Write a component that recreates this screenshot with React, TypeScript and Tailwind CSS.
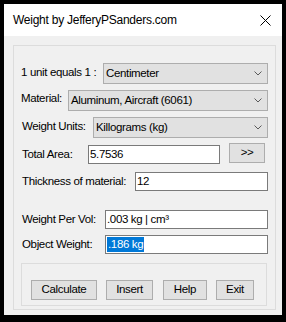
import React from 'react';

const Chevron = () => (
  <svg width="8" height="5" viewBox="0 0 8 5" className="shrink-0">
    <polyline points="0.5,0.5 4,4 7.5,0.5" fill="none" stroke="#5a5a5a" strokeWidth="1" />
  </svg>
);

const Combo = ({ value }: { value: string }) => (
  <div className="h-[21px] flex-1 min-w-0 bg-[#e1e1e1] border border-[#adadad] flex items-center justify-between pl-[2px] pr-[5px]">
    <span className="whitespace-nowrap">{value}</span>
    <Chevron />
  </div>
);

const Field = ({ children, className = '' }: { children: React.ReactNode; className?: string }) => (
  <div className={`h-[19px] bg-white border border-[#7a7a7a] flex items-center pl-[1px] whitespace-nowrap ${className}`}>
    {children}
  </div>
);

const Btn = ({ label, className = '' }: { label: string; className?: string }) => (
  <div className={`h-[20px] shrink-0 bg-[#e1e1e1] border border-[#adadad] flex items-center justify-center ${className}`}>
    {label}
  </div>
);

const Label = ({ text, className = '' }: { text: string; className?: string }) => (
  <span className={`shrink-0 whitespace-nowrap ${className}`}>{text}</span>
);

export default function App() {
  return (
    <div className="w-[286px] h-[322px] bg-black pt-[4px] px-[4px] font-['Liberation_Sans',Arial,sans-serif] text-[11.5px] tracking-[-0.35px] leading-none text-black">
      <div className="h-[311px] flex flex-col bg-[#f0f0f0]">
        {/* title bar */}
        <div className="h-[32px] shrink-0 bg-white flex items-center justify-between pl-[9px] pr-[11px]">
          <span className="text-[12px] tracking-[-0.25px]">Weight by JefferyPSanders.com</span>
          <svg width="11" height="11" viewBox="0 0 11 11">
            <path d="M0.5 0.5 L10.5 10.5 M10.5 0.5 L0.5 10.5" stroke="#000" strokeWidth="1" />
          </svg>
        </div>

        <div className="flex-1 pt-[9px] pl-[9px]">
          <div className="w-[263px] h-[265px] border border-[#dcdcdc] pl-[8px] pr-[7px] pt-[17px] flex flex-col">
            <div className="flex items-center">
              <Label text="1 unit equals 1 :" className="w-[82px] -ml-[1px] pr-[1px] -mt-[2px]" />
              <Combo value="Centimeter" />
            </div>
            <div className="flex items-center mt-[6px]">
              <Label text="Material:" className="w-[47px] -ml-[1px] pr-[1px] -mt-[3px]" />
              <Combo value="Aluminum, Aircraft (6061)" />
            </div>
            <div className="flex items-center mt-[6px]">
              <Label text="Weight Units:" className="w-[71px] -mt-[1px]" />
              <Combo value="Killograms (kg)" />
            </div>
            <div className="flex items-start mt-[5px] h-[21px]">
              <Label text="Total Area:" className="w-[66px] mt-[6px]" />
              <Field className="w-[132px] mt-[2px]">5.7536</Field>
              <Btn label=">>" className="w-[36px] ml-[9px]" />
            </div>
            <div className="flex items-center mt-[8px]">
              <Label text="Thickness of material:" className="w-[113px]" />
              <Field className="flex-1">12</Field>
            </div>
            <div className="flex items-center mt-[19px]">
              <Label text="Weight Per Vol:" className="w-[83px]" />
              <Field className="flex-1">.003 kg | cm³</Field>
            </div>
            <div className="flex items-center mt-[6px]">
              <Label text="Object Weight:" className="w-[83px]" />
              <Field className="flex-1">
                <span className="bg-[#0078d7] text-white px-[1px] py-[2px]">.186 kg</span>
              </Field>
            </div>

            <div className="mt-[9px] -ml-[1px] w-[246px] h-[43px] border border-[#dcdcdc] pt-[16px] pl-[9px] flex items-start">
              <Btn label="Calculate" className="w-[66px]" />
              <Btn label="Insert" className="w-[47px] ml-[9px]" />
              <Btn label="Help" className="w-[44px] ml-[10px]" />
              <Btn label="Exit" className="w-[38px] ml-[9px]" />
            </div>
          </div>
        </div>
      </div>
    </div>
  );
}
